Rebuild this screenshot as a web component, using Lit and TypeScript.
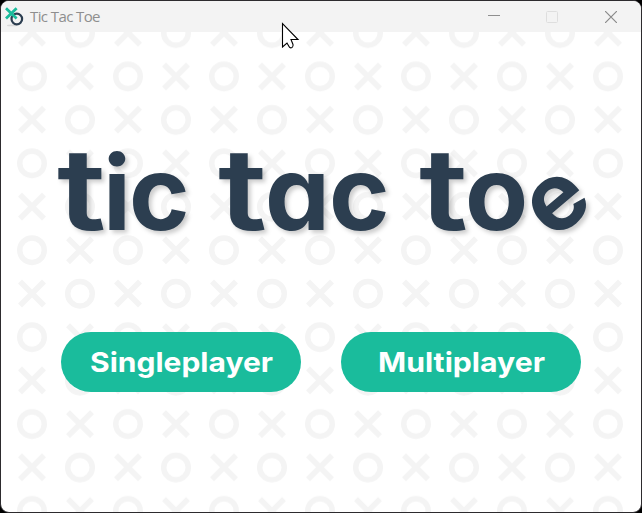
import { LitElement, html, css } from "lit";
import { customElement, property } from "lit/decorators.js";

@customElement("title-bar")
class TitleBar extends LitElement {
  static styles = css`
    :host { display: flex; align-items: center; height: 31px; background: #f3f3f3; position: relative; }
    .icon { width: 19px; height: 20px; margin-left: 4px; flex: none; }
    .name { margin: -1px 0 0 6px; font: 15px/20px "Open Sans", "Noto Sans", sans-serif; letter-spacing: -0.6px; color: #8e8e8e; flex: 1; white-space: nowrap; }
    .ctl { width: 58.5px; height: 31px; flex: none; display: flex; align-items: center; justify-content: center; }
    .last { width: 59px; margin-right: 1px; }
    .ctl svg { display: block; }
    .min { margin-left: 2px; }
  `;
  render() {
    return html`
      <svg class="icon" viewBox="0 0 19 20">
        <ellipse cx="7" cy="18.4" rx="5" ry=".9" fill="#d8d8d8" />
        <circle cx="11.8" cy="12" r="5.3" fill="none" stroke="#2c3e50" stroke-width="2.2" />
        <path d="M1 1.2L11.6 11.4M11.6 1.2L1 11.4" stroke="#1abc9c" stroke-width="2.8" />
      </svg>
      <span class="name">Tic Tac Toe</span>
      <span class="ctl"><svg class="min" width="12" height="12"><path d="M0 4.5H12" stroke="#8f8f8f" /></svg></span>
      <span class="ctl"><svg width="12" height="12"><rect x=".5" y=".5" width="11" height="11" rx="1" fill="none" stroke="#dedede" /></svg></span>
      <span class="ctl last"><svg width="12" height="12"><path d="M0 0L12 12M12 0L0 12" stroke="#8a8a8a" stroke-width="1.2" /></svg></span>
    `;
  }
}

@customElement("menu-button")
class MenuButton extends LitElement {
  @property() label = "";
  static styles = css`
    :host { display: block; width: 240px; height: 60px; }
    button { display: block; width: 100%; height: 100%; padding: 0; border: 0; border-radius: 30px; background: #1abc9c; color: #fff; font: 700 27.5px/60px Inter, "Open Sans", sans-serif; }
    svg { display: block; }
  `;
  render() {
    const w = this.label === "Multiplayer" ? 167 : 183;
    return html`<button><svg width="240" height="60"><text x="120.5" y="40" text-anchor="middle" textLength=${w} lengthAdjust="spacingAndGlyphs" fill="#fff">${this.label}</text></svg></button>`;
  }
}

@customElement("app-root")
class AppRoot extends LitElement {
  static styles = css`
    :host { display: block; width: 642px; height: 513px; background: #000; }
    .window { box-sizing: border-box; width: 642px; height: 513px; border: 1px solid #2d2b2e; border-radius: 9px; overflow: hidden; background: #fff; display: flex; flex-direction: column; position: relative; }
    .board { flex: 1; position: relative; display: flex; flex-direction: column; }
    .pattern { position: absolute; inset: 0; }
    .logo { display: block; height: 300px; width: 640px; position: relative; flex: none; filter: drop-shadow(3px 3px 2px rgba(0,0,0,.2)); }
    .logo text { font-family: Inter, "Open Sans", sans-serif; font-weight: 700; font-size: 103px; font-feature-settings: "cv11" 1; fill: #2c3e50; }
    .logo .tall { font-size: 113px; font-weight: 600; }
    .logo .slant { font-size: 95px; }
    .actions { display: flex; gap: 40px; padding-left: 60px; position: relative; }
    .cursor { position: absolute; left: 280px; top: 21px; }
  `;
  render() {
    return html`
      <div class="window">
        <title-bar></title-bar>
        <div class="board">
          <svg class="pattern" width="640" height="480">
            <defs>
              <pattern id="xo" x="7" y="-20.7" width="96" height="86.9" patternUnits="userSpaceOnUse">
                <g fill="none" stroke="#f4f4f4" stroke-width="5.5">
                  <path d="M12 9.5L36 33.5M36 9.5L12 33.5" />
                  <circle cx="72" cy="21.7" r="12.25" />
                  <circle cx="24" cy="65.1" r="12.25" />
                  <path d="M60 53.2L84 77.2M84 53.2L60 77.2" />
                </g>
              </pattern>
            </defs>
            <rect width="640" height="480" fill="url(#xo)" />
          </svg>
          <svg class="logo">
            <text y="198"><tspan class="tall" x="56" textLength="49" lengthAdjust="spacingAndGlyphs">t</tspan><tspan x="102 128">ic</tspan></text>
            <text y="198"><tspan class="tall" x="217" textLength="49" lengthAdjust="spacingAndGlyphs">t</tspan><tspan x="264 328">ac</tspan></text>
            <text y="198"><tspan class="tall" x="418" textLength="49" lengthAdjust="spacingAndGlyphs">t</tspan><tspan x="464">o</tspan><tspan class="slant" x="552" y="209.5" rotate="-40">e</tspan></text>
          </svg>
          <div class="actions">
            <menu-button label="Singleplayer"></menu-button>
            <menu-button label="Multiplayer"></menu-button>
          </div>
        </div>
        <svg class="cursor" width="19" height="28"><path d="M1.5 1.5V25L6 21L8 24.5Q9 26.5 11 25.5Q12.5 24.5 12 22.5L10 17.5H17Z" fill="#fff" stroke="#000" stroke-width="1.1" /></svg>
      </div>
    `;
  }
}
